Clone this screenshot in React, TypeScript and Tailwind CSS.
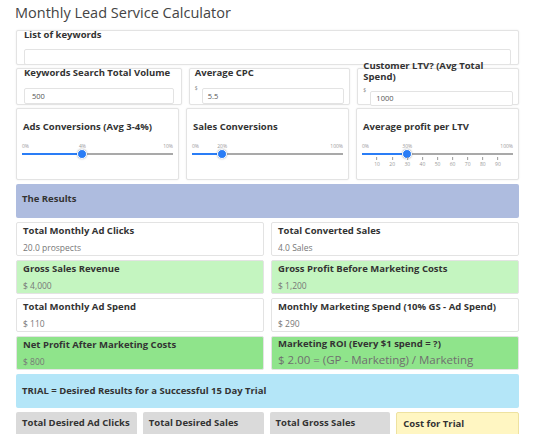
import React from "react";

const font = { fontFamily: '"Open Sans", "Liberation Sans", sans-serif' };

function Box({ children, className = "" }: { children: React.ReactNode; className?: string }) {
  return (
    <div className={`border border-[#e3e3e3] rounded-[2px] shadow-[0_0_2px_rgba(0,0,0,0.08)] bg-white ${className}`}>
      {children}
    </div>
  );
}

function Slider({ value, max, unit, ticks }: { value: number; max: number; unit: string; ticks?: boolean }) {
  const pct = (value / max) * 100;
  return (
    <div className="relative mx-[5px] h-[40px]">
      <div className="absolute left-0 top-[9px] text-[5px] leading-[6px] text-[#999]">0%</div>
      <div className="absolute right-0 top-[9px] text-[5px] leading-[6px] text-[#999]">{max}{unit}</div>
      <div className="absolute top-[9px] text-[5px] leading-[6px] text-[#999] -translate-x-1/2" style={{ left: `${pct}%` }}>
        {value}{unit}
      </div>
      <div className="absolute left-0 right-0 top-[19px] h-[2px] bg-[#a9a9a9]" />
      <div className="absolute left-0 top-[19px] h-[2px] bg-[#2a7df6]" style={{ width: `${pct}%` }} />
      <div
        className="absolute top-[15px] w-[10px] h-[10px] rounded-full bg-[#2a7df6] border border-white shadow-[0_0_2px_rgba(0,0,0,0.3)] -translate-x-1/2"
        style={{ left: `${pct}%` }}
      />
      {ticks &&
        [10, 20, 30, 40, 50, 60, 70, 80, 90].map((t) => (
          <div key={t} className="absolute top-[23px] -translate-x-1/2 flex flex-col items-center" style={{ left: `${t}%` }}>
            <div className="w-px h-[3px] bg-[#999]" />
            <div className="text-[5px] text-[#999] leading-[8px]">{t}</div>
          </div>
        ))}
    </div>
  );
}

function Result({ label, value, bg, big }: { label: string; value: string; bg: string; big?: boolean }) {
  return (
    <div className={`flex-1 h-[34px] px-[6px] rounded-[2px] border border-[#e3e3e3] ${bg}`}>
      <div className={`text-[9.5px] font-bold text-[#333] leading-[14px] ${big ? "pt-0" : "pt-[1px]"}`}>{label}</div>
      {big ? (
        <div className="text-[11.5px] text-[#6f6f6f] leading-[16px] mt-[1px] whitespace-nowrap">{value}</div>
      ) : (
        <div className="text-[8.5px] text-[#777] leading-[14px] mt-[3px]">{value}</div>
      )}
    </div>
  );
}

const bottomCell = "flex-1 h-[30px] rounded-[2px] px-[6px] pt-[4px] text-[9.5px] leading-[14px] font-bold text-[#333] whitespace-nowrap";

export default function App() {
  return (
    <div className="w-[540px] h-[434px] overflow-hidden bg-white" style={font}>
      <div className="ml-4 w-[503px]">
        <h1 className="text-[14.5px] leading-[22px] text-[#444] pt-[2px] -ml-[1px] mb-[6px]">Monthly Lead Service Calculator</h1>

        <Box className="h-[35px] px-[7px]">
          <div className="text-[9.5px] font-bold text-[#333] leading-[12px] -mt-[2px]">List of keywords</div>
          <div className="mt-[8px] h-[16px] border border-[#e3e3e3] rounded-[2px]" />
        </Box>

        <div className="flex gap-[7px] mt-[3px]">
          <Box className="flex-1 h-[37px] px-[7px]">
            <div className="text-[9.5px] font-bold text-[#333] leading-[12px] -mt-[2px]">Keywords Search Total Volume</div>
            <div className="mt-[9px] h-[16px] border border-[#e3e3e3] rounded-[2px] text-[7.5px] text-[#555] pl-[7px] leading-[14px]">500</div>
          </Box>
          <Box className="flex-1 h-[37px] px-[5px]">
            <div className="text-[9.5px] font-bold text-[#333] leading-[12px] -mt-[2px]">Average CPC</div>
            <div className="flex items-start mt-[6px]">
              <span className="text-[5px] leading-[6px] text-[#888] w-[7px]">$</span>
              <div className="flex-1 mt-[3px] h-[16px] border border-[#e3e3e3] rounded-[2px] text-[7.5px] text-[#555] pl-[5px] leading-[14px]">5.5</div>
            </div>
          </Box>
          <Box className="flex-1 h-[37px] px-[5px]">
            <div className="text-[9.5px] font-bold text-[#333] leading-[11px] -mt-[9px] pr-[20px]">Customer LTV? (Avg Total Spend)</div>
            <div className="flex items-start mt-[5px]">
              <span className="text-[5px] leading-[6px] text-[#888] w-[7px]">$</span>
              <div className="flex-1 mt-[4px] h-[15px] border border-[#e3e3e3] rounded-[2px] text-[7.5px] text-[#555] pl-[5px] leading-[13px] bg-white">1000</div>
            </div>
          </Box>
        </div>

        <div className="flex gap-[7px] mt-[3px]">
          <Box className="flex-1 h-[72px]">
            <div className="px-[6px] pt-[11px] text-[9.5px] font-bold text-[#333] leading-[14px]">Ads Conversions (Avg 3-4%)</div>
            <Slider value={4} max={10} unit="%" />
          </Box>
          <Box className="flex-1 h-[72px]">
            <div className="px-[6px] pt-[11px] text-[9.5px] font-bold text-[#333] leading-[14px]">Sales Conversions</div>
            <Slider value={20} max={100} unit="%" />
          </Box>
          <Box className="flex-1 h-[72px]">
            <div className="px-[6px] pt-[11px] text-[9.5px] font-bold text-[#333] leading-[14px]">Average profit per LTV</div>
            <Slider value={30} max={100} unit="%" ticks />
          </Box>
        </div>

        <div className="mt-[4px] h-[34px] bg-[#aebcdf] rounded-[2px] px-[6px] pb-[3px] flex items-center text-[9.5px] font-bold text-[#333]">
          The Results
        </div>

        <div className="flex flex-col gap-[4px] mt-[4px]">
          <div className="flex gap-[7px]">
            <Result label="Total Monthly Ad Clicks" value="20.0 prospects" bg="bg-white" />
            <Result label="Total Converted Sales" value="4.0 Sales" bg="bg-white" />
          </div>
          <div className="flex gap-[7px]">
            <Result label="Gross Sales Revenue" value="$ 4,000" bg="bg-[#c4f5c0]" />
            <Result label="Gross Profit Before Marketing Costs" value="$ 1,200" bg="bg-[#c4f5c0]" />
          </div>
          <div className="flex gap-[7px]">
            <Result label="Total Monthly Ad Spend" value="$ 110" bg="bg-white" />
            <Result label="Monthly Marketing Spend (10% GS - Ad Spend)" value="$ 290" bg="bg-white" />
          </div>
          <div className="flex gap-[7px]">
            <Result label="Net Profit After Marketing Costs" value="$ 800" bg="bg-[#8fe48b]" />
            <Result label="Marketing ROI (Every $1 spend = ?)" value="$ 2.00 = (GP - Marketing) / Marketing" bg="bg-[#8fe48b]" big />
          </div>
        </div>

        <div className="mt-[4px] h-[34px] bg-[#b4e6f8] rounded-[2px] px-[6px] flex items-center text-[9.5px] font-bold text-[#333]">
          TRIAL = Desired Results for a Successful 15 Day Trial
        </div>

        <div className="flex gap-[6px] mt-[4px]">
          <div className={`${bottomCell} bg-[#dadada]`}>Total Desired Ad Clicks</div>
          <div className={`${bottomCell} bg-[#dadada]`}>Total Desired Sales</div>
          <div className={`${bottomCell} bg-[#dadada]`}>Total Gross Sales</div>
          <div className={`${bottomCell} bg-[#fff6c2] border border-[#eee2a0]`}>Cost for Trial</div>
        </div>
      </div>
    </div>
  );
}
